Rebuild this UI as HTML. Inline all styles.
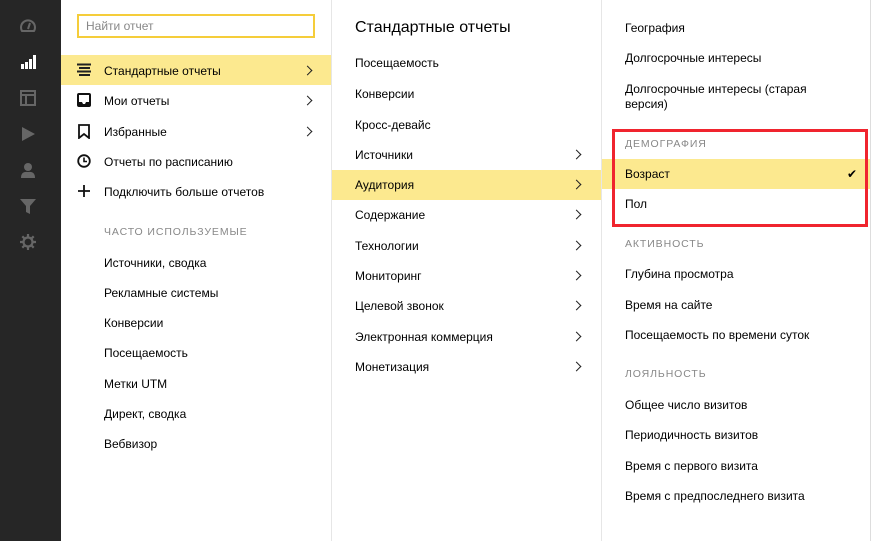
<!DOCTYPE html>
<html><head><meta charset="utf-8">
<style>
*{margin:0;padding:0;box-sizing:border-box}
body{width:872px;height:541px;overflow:hidden;background:#fff;font-family:"Liberation Sans",sans-serif;font-size:12px;color:#000;position:relative}
.sb{position:absolute;left:0;top:0;width:61px;height:541px;background:#262626}
.ic{position:absolute;left:19px;width:18px;height:18px}
.t{position:absolute;white-space:nowrap;line-height:16px;margin-top:1px}
.h{position:absolute;white-space:nowrap;font-size:10.5px;letter-spacing:0.9px;color:#888;line-height:14px;margin-top:1px}
.hl{position:absolute;background:#fce98f}
.ar{position:absolute;width:7px;height:7px;border-right:1.5px solid #222;border-top:1.5px solid #222;transform:rotate(45deg)}
.vl{position:absolute;top:0;width:1px;height:541px;background:#e6e6e6}
</style></head><body>
<div class="sb">
<svg class="ic" style="top:17px" viewBox="0 0 18 18"><path d="M3 14 A7 7 0 1 1 15 14 Z" fill="none" stroke="#666" stroke-width="2"/><path d="M9 12 L11 6" stroke="#666" stroke-width="2"/></svg>
<svg class="ic" style="top:53px" viewBox="0 0 18 18"><rect x="2" y="11" width="3" height="5" fill="#fff"/><rect x="6" y="9" width="3" height="7" fill="#fff"/><rect x="10" y="6" width="3" height="10" fill="#fff"/><rect x="14" y="2" width="3" height="14" fill="#fff"/></svg>
<svg class="ic" style="top:89px" viewBox="0 0 18 18"><rect x="2" y="2" width="14" height="14" fill="none" stroke="#666" stroke-width="2"/><path d="M2 6H16M7 6V16" stroke="#666" stroke-width="2"/></svg>
<svg class="ic" style="top:125px" viewBox="0 0 18 18"><path d="M3 2L16 9L3 16Z" fill="#666"/></svg>
<svg class="ic" style="top:161px" viewBox="0 0 18 18"><circle cx="9" cy="6" r="4" fill="#666"/><path d="M2 17 Q2 10 9 11 Q16 10 16 17Z" fill="#666"/></svg>
<svg class="ic" style="top:197px" viewBox="0 0 18 18"><path d="M1 2H17L11 9V17L7 15V9Z" fill="#666"/></svg>
<svg class="ic" style="top:233px" viewBox="0 0 18 18"><circle cx="9" cy="9" r="4.5" fill="none" stroke="#666" stroke-width="2.2"/><path d="M9 1V4M9 14V17M1 9H4M14 9H17M3.3 3.3L5.5 5.5M12.5 12.5L14.7 14.7M3.3 14.7L5.5 12.5M12.5 5.5L14.7 3.3" stroke="#666" stroke-width="2.2"/></svg>
</div>
<div class="vl" style="left:331px"></div>
<div class="vl" style="left:601px"></div>
<div class="vl" style="left:870px;background:#ddd"></div>

<div style="position:absolute;left:77px;top:14px;width:238px;height:24px;border:2px solid #f5cd3a;padding-left:7px;line-height:20px;color:#888;font-size:12px">Найти отчет</div>

<div class="hl" style="left:61px;top:55px;width:270px;height:30px"></div>
<div class="hl" style="left:332px;top:170px;width:269px;height:30px"></div>
<div class="hl" style="left:602px;top:159px;width:268px;height:30px"></div>

<svg style="position:absolute;left:77px;top:63px" width="14" height="14" viewBox="0 0 14 14"><path d="M0 1.5H14M2 5H13M0 8.5H14M2 12H13" stroke="#222" stroke-width="2"/></svg>
<svg style="position:absolute;left:77px;top:93px" width="14" height="14" viewBox="0 0 14 14"><rect x="1" y="1" width="12" height="12" rx="1" fill="none" stroke="#111" stroke-width="2"/><path d="M1 9H5L6 11H8L9 9H13V13H1Z" fill="#111"/></svg>
<svg style="position:absolute;left:78px;top:124px" width="12" height="15" viewBox="0 0 12 15"><path d="M1 1H11V14L6 10L1 14Z" fill="none" stroke="#111" stroke-width="1.8"/></svg>
<svg style="position:absolute;left:77px;top:154px" width="14" height="14" viewBox="0 0 14 14"><circle cx="7" cy="7" r="5.8" fill="none" stroke="#111" stroke-width="1.8"/><path d="M7 3.5V7.5H10" fill="none" stroke="#111" stroke-width="1.6"/></svg>
<svg style="position:absolute;left:78px;top:185px" width="12" height="12" viewBox="0 0 12 12"><path d="M6 0V12M0 6H12" stroke="#111" stroke-width="1.8"/></svg>

<div class="t" style="left:104px;top:62px">Стандартные отчеты</div>
<div class="t" style="left:104px;top:92px">Мои отчеты</div>
<div class="t" style="left:104px;top:123px">Избранные</div>
<div class="t" style="left:104px;top:153px">Отчеты по расписанию</div>
<div class="t" style="left:104px;top:183px">Подключить больше отчетов</div>
<div class="h" style="left:104px;top:224px">ЧАСТО ИСПОЛЬЗУЕМЫЕ</div>
<div class="t" style="left:104px;top:254px">Источники, сводка</div>
<div class="t" style="left:104px;top:284px">Рекламные системы</div>
<div class="t" style="left:104px;top:314px">Конверсии</div>
<div class="t" style="left:104px;top:344px">Посещаемость</div>
<div class="t" style="left:104px;top:375px">Метки UTM</div>
<div class="t" style="left:104px;top:405px">Директ, сводка</div>
<div class="t" style="left:104px;top:435px">Вебвизор</div>
<div class="ar" style="left:304px;top:67px"></div>
<div class="ar" style="left:304px;top:97px"></div>
<div class="ar" style="left:304px;top:128px"></div>

<div class="t" style="left:355px;top:17px;font-size:16px;line-height:20px">Стандартные отчеты</div>
<div class="t" style="left:355px;top:54px">Посещаемость</div>
<div class="t" style="left:355px;top:85px">Конверсии</div>
<div class="t" style="left:355px;top:116px">Кросс-девайс</div>
<div class="t" style="left:355px;top:146px">Источники</div>
<div class="t" style="left:355px;top:176px">Аудитория</div>
<div class="t" style="left:355px;top:206px">Содержание</div>
<div class="t" style="left:355px;top:237px">Технологии</div>
<div class="t" style="left:355px;top:267px">Мониторинг</div>
<div class="t" style="left:355px;top:297px">Целевой звонок</div>
<div class="t" style="left:355px;top:328px">Электронная коммерция</div>
<div class="t" style="left:355px;top:358px">Монетизация</div>
<div class="ar" style="left:573px;top:151px"></div>
<div class="ar" style="left:573px;top:181px"></div>
<div class="ar" style="left:573px;top:211px"></div>
<div class="ar" style="left:573px;top:242px"></div>
<div class="ar" style="left:573px;top:272px"></div>
<div class="ar" style="left:573px;top:302px"></div>
<div class="ar" style="left:573px;top:333px"></div>
<div class="ar" style="left:573px;top:363px"></div>

<div class="t" style="left:625px;top:19px">География</div>
<div class="t" style="left:625px;top:49px">Долгосрочные интересы</div>
<div class="t" style="left:625px;top:80px">Долгосрочные интересы (старая</div>
<div class="t" style="left:625px;top:95px">версия)</div>
<div class="h" style="left:625px;top:136px">ДЕМОГРАФИЯ</div>
<div class="t" style="left:625px;top:165px">Возраст</div>
<div class="t" style="left:847px;top:165px;font-size:12px">✔</div>
<div class="t" style="left:625px;top:195px">Пол</div>
<div class="h" style="left:625px;top:236px">АКТИВНОСТЬ</div>
<div class="t" style="left:625px;top:265px">Глубина просмотра</div>
<div class="t" style="left:625px;top:296px">Время на сайте</div>
<div class="t" style="left:625px;top:326px">Посещаемость по времени суток</div>
<div class="h" style="left:625px;top:366px">ЛОЯЛЬНОСТЬ</div>
<div class="t" style="left:625px;top:396px">Общее число визитов</div>
<div class="t" style="left:625px;top:426px">Периодичность визитов</div>
<div class="t" style="left:625px;top:457px">Время с первого визита</div>
<div class="t" style="left:625px;top:487px">Время с предпоследнего визита</div>

<div style="position:absolute;left:612px;top:129px;width:256px;height:98px;border:3px solid #f0242e"></div>
</body></html>
